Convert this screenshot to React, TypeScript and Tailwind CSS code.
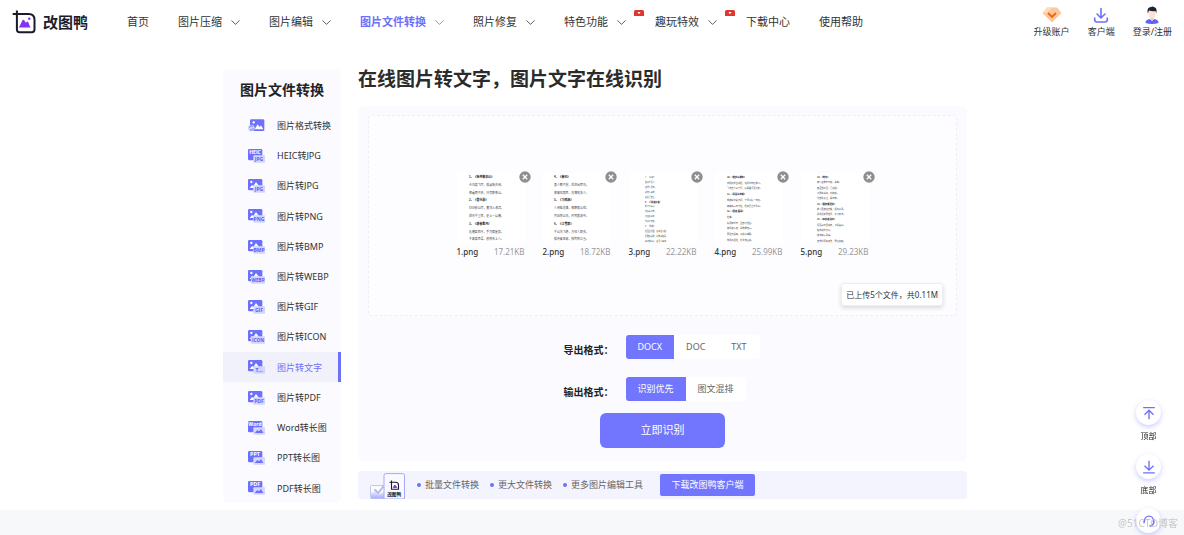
import React, { useState } from 'react'
import clsx from 'clsx'

type IconKind = 'swap' | 'toLabel' | 'fromLabel' | 'heic'

interface Tool {
  name: string
  kind: IconKind
  label?: string
}

const navItems = [
  { name: '首页' },
  { name: '图片压缩', menu: true },
  { name: '图片编辑', menu: true },
  { name: '图片文件转换', menu: true, active: true },
  { name: '照片修复', menu: true },
  { name: '特色功能', menu: true, hot: true },
  { name: '趣玩特效', menu: true, hot: true },
  { name: '下载中心' },
  { name: '使用帮助' },
]

const tools: Tool[] = [
  { name: '图片格式转换', kind: 'swap' },
  { name: 'HEIC转JPG', kind: 'heic', label: 'JPG' },
  { name: '图片转JPG', kind: 'toLabel', label: 'JPG' },
  { name: '图片转PNG', kind: 'toLabel', label: 'PNG' },
  { name: '图片转BMP', kind: 'toLabel', label: 'BMP' },
  { name: '图片转WEBP', kind: 'toLabel', label: 'WEBP' },
  { name: '图片转GIF', kind: 'toLabel', label: 'GIF' },
  { name: '图片转ICON', kind: 'toLabel', label: 'ICON' },
  { name: '图片转文字', kind: 'toLabel', label: 'T...' },
  { name: '图片转PDF', kind: 'toLabel', label: 'PDF' },
  { name: 'Word转长图', kind: 'fromLabel', label: 'Word' },
  { name: 'PPT转长图', kind: 'fromLabel', label: 'PPT' },
  { name: 'PDF转长图', kind: 'fromLabel', label: 'PDF' },
]

// x, step and font place the lines of text on a page preview, # marks a title
const files = [
  {
    name: '1.png', size: '17.21KB', x: 12, step: 7.8, font: 2.9,
    lines: ['#1、《独坐敬亭山》', '众鸟高飞尽，孤云独去闲。', '相看两不厌，只有敬亭山。', '#2、《登乐游》', '白日依山尽，黄河入海流。', '欲穷千里目，更上一层楼。', '#3、《静夜思月》', '危楼高百尺，手可摘星辰。', '不敢高声语，恐惊天上人。'],
  },
  {
    name: '2.png', size: '18.72KB', x: 11, step: 7.8, font: 2.9,
    lines: ['#4、《春晓》', '春人眠不觉，处处闻啼鸟。', '夜来风雨声，花落知多少。', '#5、《鸟鸣涧》', '人闲桂花落，夜静春山空。', '月出惊山鸟，时鸣春涧中。', '#6、《江雪歌》', '千山鸟飞绝，万径人踪灭。', '孤舟蓑笠翁，独钓寒江雪。'],
  },
  {
    name: '3.png', size: '22.22KB', x: 16, step: 4.9, font: 1.9,
    lines: ['7、《山中》', '空山不见人，', '但闻人语响。', '返景入深林，', '复照青苔上。', '#8、《寻隐者不遇》', '松下问童子，', '言师采药去。', '只在此山中，', '云深不知处。', '9、《咏鹅》', '红豆生南国，春来发几枝。', '愿君多采撷，此物最相思。', '白日依山尽，黄河入海流。'],
  },
  {
    name: '4.png', size: '25.99KB', x: 12, step: 5.7, font: 2.2,
    lines: ['#10、《望庐山瀑布》', '日照香炉生紫烟，遥看瀑布挂前川。', '飞流直下三千尺，疑是银河落九天。', '#11、《早发白帝城》', '朝辞白帝彩云间，千里江陵一日还。', '两岸猿声啼不住，轻舟已过万重山。', '#12、《春夜 喜雨》', '杜甫。', '好雨知时节，当春乃发生。', '随风潜入夜，润物细无声。', '野径云俱黑，江船火独明。', '晓看红湿处，花重锦官城。'],
  },
  {
    name: '5.png', size: '29.23KB', x: 16, step: 5.3, font: 2.2,
    lines: ['#13、《绝句》', '两个黄鹂鸣翠柳，白鹭。', '窗含西岭雪，门泊船。', '江碧鸟逾白，花欲燃。', '今春看又过，是归年。', '#14、《黄鹤楼送别》', '故人西辞黄鹤楼，烟花三月。', '孤帆远影碧空尽，长江天流。', '#15、《枫桥夜泊诗》', '月落乌啼霜满天，江枫渔火。', '姑苏城外寒山，', '夜半钟声到客。', '春潮带雨晚来急，野渡舟横。'],
  },
]

const textStack = "font-['Noto_Sans','Noto_Sans_CJK_SC',sans-serif]"

function Logo({ className }: { className?: string }) {
  return (
    <svg viewBox="0 0 24 24" className={className} fill="none">
      <path d="M0 3.300h16q5.800 0 5.800 5.800v9.900q0 2.600-2.600 2.600H6.800q-2.600 0-2.600-2.600V0" stroke="#191a2b" strokeWidth="2" transform="translate(.7 .6)" />
      <path d="M6.600 17.500c1.900-1 3-7.700 4.900-7.700 1.300 0 1.500 2.800 2.300 2.800.6 0 .9-1.200 1.600-1.200 1.500 0 1.900 5 3.500 6.100z" fill="#8532f5" />
      <circle cx="17.300" cy="8.800" r="1.200" fill="#8532f5" />
    </svg>
  )
}

function Chevron() {
  return (
    <svg viewBox="0 0 9 5" className="h-[5px] w-[9px]" fill="none" stroke="currentColor" strokeWidth="0.8">
      <path d="M.5.4l4 4 4-4" />
    </svg>
  )
}

function HotBadge() {
  return (
    <svg viewBox="0 0 10 6" className="absolute -top-1 left-full ml-2 h-[6px] w-[10px]">
      <path d="M1.500 0h7A1.500 1.500 0 0 1 10 1.500V6H0V1.500A1.500 1.500 0 0 1 1.500 0z" fill="#e2352f" />
      <path d="M3.500 2h3L5 4.300z" fill="#fff" />
    </svg>
  )
}

function ToolIcon({ kind, label = '' }: { kind: IconKind; label?: string }) {
  if (kind === 'swap') {
    return (
      <svg viewBox="0 0 51 42" className="h-[14px] w-[17px]">
        <rect x="6" y="1" width="43" height="35" rx="4" fill="#6d70fc" />
        <path d="M20 31l9-15 6 8 4-5 7 12z" fill="#fff" />
        <circle cx="17" cy="10" r="3.500" fill="#fff" />
        <circle cx="10" cy="27" r="10" fill="#d3d5ff" />
        <path d="M4.500 26a5.500 5.500 0 0 1 10-3M15.500 28a5.500 5.500 0 0 1-10 3" stroke="#6d70fc" strokeWidth="3" fill="none" />
      </svg>
    )
  }
  const wide = kind === 'toLabel' && (label === 'WEBP' || label === 'ICON')
  return (
    <svg viewBox="0 0 51 42" className="h-[14px] w-[17px] font-['Open_Sans',sans-serif] font-bold">
      <rect width="43" height="34" rx="4" fill="#6d70fc" />
      {kind === 'toLabel' && (
        <>
          <path d="M5 27l7-9 4 3 8-12 12 16v2z" fill="#fff" />
          <circle cx="10" cy="9" r="3.500" fill="#fff" />
        </>
      )}
      {kind !== 'toLabel' && (
        <text x="21" y="15" fontSize={label === 'Word' || kind === 'heic' ? 15 : 16} textAnchor="middle" fill="#fff">
          {kind === 'heic' ? 'HEIC' : label}
        </text>
      )}
      <rect x={wide ? 9 : 16} y="19" width={wide ? 42 : 35} height="22" rx="2" fill="#d3d5ff" />
      {kind === 'fromLabel' ? (
        <path d="M20 36l8-9 5 4 6-7 7 12z" fill="#6d70fc" />
      ) : (
        <text x={wide ? 30 : 33} y="36" fontSize={wide ? 14 : 15} textAnchor="middle" fill="#5a5ef5">
          {label}
        </text>
      )}
    </svg>
  )
}

function PagePreview({ file }: { file: (typeof files)[number] }) {
  return (
    <svg viewBox="0 0 68 70" className="h-[70px] w-[68px] bg-white font-['Noto_Sans_CJK_SC',sans-serif]">
      {file.lines.map((line, i) => {
        const title = line.startsWith('#')
        return (
          <text
            key={i}
            x={file.x}
            y={5 + i * file.step}
            fontSize={file.font}
            fontWeight={title ? 700 : 400}
            fill={title ? '#111' : '#444'}
          >
            {line.replace('#', '')}
          </text>
        )
      })}
    </svg>
  )
}

function Header() {
  return (
    <header className="flex h-11 items-center px-3 text-[#333]">
      <a href="#" className="flex w-[115px] items-center gap-[7px]">
        <Logo className="h-6 w-6" />
        <span className="text-[15px] font-bold text-[#1c1d2c]">改图鸭</span>
      </a>
      <nav>
        <ul className="flex gap-[29px] pt-px text-[11px] whitespace-nowrap">
          {navItems.map((item) => (
            <li key={item.name} className="relative">
              <a href="#" className={clsx('flex items-center gap-[9px]', item.active && 'font-bold text-[#6d70fc]')}>
                {item.name}
                {item.menu && <Chevron />}
              </a>
              {item.hot && <HotBadge />}
            </li>
          ))}
        </ul>
      </nav>
      <div className="ml-auto flex gap-[18px] text-[9px] leading-[13px] whitespace-nowrap">
        <a href="#" className="flex flex-col items-center gap-[1px]">
          <svg viewBox="0 0 20 18" className="h-[18px] w-5">
            <path d="M5 1.500h10L19.500 7 10 16.500.5 7z" fill="#fbc79b" />
            <path d="M5 1.500L.5 7H5l5-5.500z" fill="#fddcc0" />
            <path d="M6.500 7.500L10 10.900 13.500 7.500" stroke="#f2640c" strokeWidth="1.800" fill="none" strokeLinecap="round" />
          </svg>
          升级账户
        </a>
        <a href="#" className="flex flex-col items-center gap-[1px]">
          <svg viewBox="0 0 18 18" className="h-[18px] w-[18px]" fill="none" stroke="#6d70fc" strokeWidth="1.600" strokeLinecap="round" strokeLinejoin="round">
            <path d="M9 2.500v9.500M5 8l4 4 4-4M2.700 12v1.800Q2.700 16 5 16h8q2.300 0 2.300-2.200V12" />
          </svg>
          客户端
        </a>
        <a href="#" className="flex flex-col items-center gap-[1px]">
          <svg viewBox="0 0 18 18" className="h-[18px] w-[18px]">
            <path d="M2.500 17q0-3.500 4.500-4l2 2 2-2q4.500.5 4.500 4-6.500 2-13 0z" fill="#5b62f6" />
            <path d="M7.300 10h3.400v3.500L9 15l-1.700-1.500z" fill="#f6cdb8" />
            <path d="M5.400 5h7.200v3.500Q12 12.500 9 12.500T5.400 8.500z" fill="#fde3d5" />
            <path d="M4.800 7.500Q3.500 1 8 1q1.500-1 3.500.3Q14.500 2 13.200 7.500l-.7-2.500q-3.500.5-6.500-.5z" fill="#20232f" />
          </svg>
          登录/注册
        </a>
      </div>
    </header>
  )
}

function Sidebar() {
  return (
    <aside className="flex h-[434px] w-[118px] shrink-0 flex-col overflow-hidden rounded-md bg-[#fafaff]">
      <h2 className="flex h-[41px] items-center justify-center text-[14px] font-bold text-[#222]">图片文件转换</h2>
      <ul className="grid flex-1 auto-rows-fr text-[9px] text-[#333]">
        {tools.map((tool) => {
          const active = tool.name === '图片转文字'
          return (
            <li key={tool.name}>
              <a
                href="#"
                className={clsx(
                  'flex h-full items-center gap-3 border-r-[3px] pt-px pl-[25px] whitespace-nowrap',
                  active ? 'border-[#6d70fc] bg-[#f1f1fb] text-[#6d70fc]' : 'border-transparent'
                )}
              >
                <ToolIcon kind={tool.kind} label={tool.label} />
                {tool.name}
              </a>
            </li>
          )
        })}
      </ul>
    </aside>
  )
}

interface OptionsProps {
  label: string
  options: string[]
  value: string
  onChange: (v: string) => void
}

function Options({ label, options, value, onChange }: OptionsProps) {
  return (
    <>
      <span className="pt-2 text-[10px] font-bold text-[#222]">{label}：</span>
      <div role="group" aria-label={label} className="flex h-6 justify-self-start overflow-hidden rounded-[3px] bg-white">
        {options.map((o) => (
          <button
            key={o}
            type="button"
            onClick={() => onChange(o)}
            className={clsx('min-w-[43px] px-3 text-[9px] whitespace-nowrap', o === value ? 'bg-[#7276ff] text-white' : 'text-[#666]')}
          >
            {o}
          </button>
        ))}
      </div>
    </>
  )
}

function UploadPanel() {
  const [format, setFormat] = useState('DOCX')
  const [mode, setMode] = useState('识别优先')

  return (
    <section className="rounded-md bg-[#fafaff] px-[10px] pt-[9px] pb-[13px]">
      <div className="relative flex h-[201px] justify-center gap-[18px] rounded-sm border border-dashed border-[#eeeef8] bg-[#fdfdff] pt-[57px]">
        {files.map((file) => (
          <div key={file.name} className="relative w-[68px]">
            <PagePreview file={file} />
            <div className="flex justify-between text-[8px] leading-[18px]">
              <span className="font-medium text-[#333]">{file.name}</span>
              <span className="text-[#999]">{file.size}</span>
            </div>
            <button type="button" aria-label="删除" className="absolute -top-[2px] -right-[6px]">
              <svg viewBox="0 0 12 12" className="h-3 w-3">
                <circle cx="6" cy="6" r="5.700" fill="#8e8e8e" />
                <path d="M3.800 3.800l4.400 4.400M8.200 3.800L3.800 8.200" stroke="#fff" strokeWidth="1.300" />
              </svg>
            </button>
          </div>
        ))}
        <div className="absolute right-[13px] bottom-[9px] rounded-[3px] border border-[#eeeef2] bg-white px-1 text-[8px] leading-[21px] text-[#333] shadow-[0_2px_4px_rgba(0,0,0,0.14)]">
          已上传5个文件，共0.11M
        </div>
      </div>

      <div className="mx-auto mt-[19px] grid w-[198px] grid-cols-[62px_1fr] gap-y-[18px]">
        <Options label="导出格式" options={['DOCX', 'DOC', 'TXT']} value={format} onChange={setFormat} />
        <Options label="输出格式" options={['识别优先', '图文混排']} value={mode} onChange={setMode} />
      </div>
      <button type="button" className="mx-auto mt-3 block h-[35px] w-[125px] rounded-md bg-[#7276ff] text-[11px] text-white">
        立即识别
      </button>
    </section>
  )
}

function ClientBanner() {
  return (
    <section className="mt-[10px] flex h-7 items-center rounded-[3px] bg-[#f4f4ff] pl-3 text-[9px] text-[#666]">
      <svg viewBox="0 0 36 26" className="h-[26px] w-9 self-end font-['Noto_Sans_CJK_SC',sans-serif]">
        <defs>
          <linearGradient id="pic" x1="0" y1="0" x2="0" y2="1">
            <stop offset="0" stopColor="#f1f1ff" />
            <stop offset="1" stopColor="#a9adfc" />
          </linearGradient>
        </defs>
        <rect x=".5" y="12.500" width="14" height="13" rx="1" fill="#fafaff" stroke="#c3c6fb" />
        <path d="M1 25.500v-5l4-3 4 4 5-3v7z" fill="url(#pic)" />
        <path d="M4.500 16.500l4 3.500 5-7" stroke="#b3b7dc" strokeWidth="1.800" fill="none" />
        <path d="M14 26V2.500Q14 .6 16 .6h16.500q2 0 2 1.900V26z" fill="#f9f9ff" stroke="#a5a9fb" strokeWidth="1" />
        <path d="M19.500 9.300h6q3 0 3 3v4h-7V7.500" stroke="#191a2b" strokeWidth="1.100" fill="none" />
        <path d="M23.300 14.500l1.500-2.500 2 2.500z" fill="#8532f5" stroke="#8532f5" />
        <text x="24.200" y="23.200" fontSize="4.700" fontWeight="700" textAnchor="middle" fill="#191a2b">改图鸭</text>
      </svg>
      <ul className="ml-[11px] flex gap-[11px] whitespace-nowrap">
        {['批量文件转换', '更大文件转换', '更多图片编辑工具'].map((text) => (
          <li key={text} className="flex items-center gap-1">
            <span className="h-1 w-1 rounded-full bg-[#6d70fc]" />
            {text}
          </li>
        ))}
      </ul>
      <a href="#" className="ml-[17px] w-[95px] rounded-[2px] bg-[#7276ff] text-center leading-[22px] text-white">
        下载改图鸭客户端
      </a>
    </section>
  )
}

const floating = [
  { label: '顶部', path: 'M3.500 4h13M10 17V7M5 12l5-5 5 5' },
  { label: '底部', path: 'M3.500 16.500h13M10 3v10.500M5 8.500l5 5 5-5' },
  { label: '', path: 'M5 11V9.500a5 5 0 0 1 10 0V11M4.500 9.500v3M15.500 9.500v3M15 12q-.5 3.500-4.500 3.500' },
]

function FloatingBar() {
  return (
    <div className="fixed top-[400px] right-[23px] flex flex-col gap-3 text-[8px] text-[#222]">
      {floating.map((item) => (
        <button key={item.path} type="button" aria-label={item.label || '客服'} className="flex flex-col items-center gap-1">
          <span className="flex h-[25px] w-[25px] items-center justify-center rounded-full bg-white shadow-[0_2px_5px_rgba(109,112,252,0.35)]">
            <svg viewBox="0 0 20 20" className="h-[18px] w-[18px]" fill="none" stroke="#6d70fc" strokeWidth="1.500">
              <path d={item.path} />
            </svg>
          </span>
          {item.label && <span className="leading-[13px]">{item.label}</span>}
        </button>
      ))}
    </div>
  )
}

export default function App() {
  return (
    <div className={clsx('flex min-h-screen flex-col bg-white', textStack)}>
      <Header />
      <div className="mx-auto flex w-full max-w-[750px] gap-[17px] pt-[25px] pb-[7px] pl-[6px]">
        <Sidebar />
        <main className="min-w-0 flex-1">
          <h1 className="mb-[17px] text-[19px] leading-[20px] font-bold text-[#2b2b2b]">在线图片转文字，图片文字在线识别</h1>
          <UploadPanel />
          <ClientBanner />
        </main>
      </div>
      <footer className="flex-1 bg-[#f7f8fa]" />
      <FloatingBar />
      <span className="pointer-events-none fixed right-[6px] bottom-1 text-[10px] leading-[15px] text-[#bbb]/80">@51CTO博客</span>
    </div>
  )
}
